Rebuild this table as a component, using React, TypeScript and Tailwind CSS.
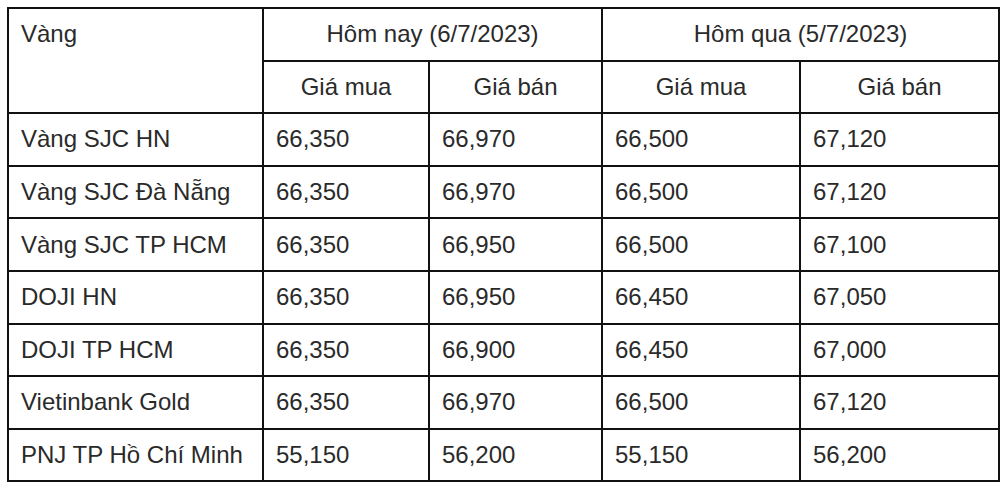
const rows = [
  ["Vàng SJC HN", "66,350", "66,970", "66,500", "67,120"],
  ["Vàng SJC Đà Nẵng", "66,350", "66,970", "66,500", "67,120"],
  ["Vàng SJC TP HCM", "66,350", "66,950", "66,500", "67,100"],
  ["DOJI HN", "66,350", "66,950", "66,450", "67,050"],
  ["DOJI TP HCM", "66,350", "66,900", "66,450", "67,000"],
  ["Vietinbank Gold", "66,350", "66,970", "66,500", "67,120"],
  ["PNJ TP Hồ Chí Minh", "55,150", "56,200", "55,150", "56,200"],
];

const cell = "border-2 border-[#111] px-3 h-[52.6px] font-normal whitespace-nowrap";

export default function App() {
  return (
    <div className="bg-white w-[1008px] h-[490px] pt-[7px] pl-[7px] text-[24px] leading-[36px] text-[#2a2a2a] font-['Liberation_Sans',Arial,sans-serif]">
      <table className="table-fixed border-collapse w-[991px]">
        <colgroup>
          <col className="w-[255px]" />
          <col className="w-[166px]" />
          <col className="w-[173px]" />
          <col className="w-[198px]" />
          <col className="w-[199px]" />
        </colgroup>
        <thead>
          <tr>
            <th rowSpan={2} className={`${cell} text-left align-top pt-[7px]`}>
              Vàng
            </th>
            <th colSpan={2} className={`${cell} text-center`}>
              Hôm nay (6/7/2023)
            </th>
            <th colSpan={2} className={`${cell} text-center`}>
              Hôm qua (5/7/2023)
            </th>
          </tr>
          <tr>
            <th className={`${cell} text-center`}>Giá mua</th>
            <th className={`${cell} text-center`}>Giá bán</th>
            <th className={`${cell} text-center`}>Giá mua</th>
            <th className={`${cell} text-center`}>Giá bán</th>
          </tr>
        </thead>
        <tbody>
          {rows.map((r, i) => (
            <tr key={i}>
              {r.map((v, j) => (
                <td key={j} className={`${cell} text-left`}>
                  {v}
                </td>
              ))}
            </tr>
          ))}
        </tbody>
      </table>
    </div>
  );
}
